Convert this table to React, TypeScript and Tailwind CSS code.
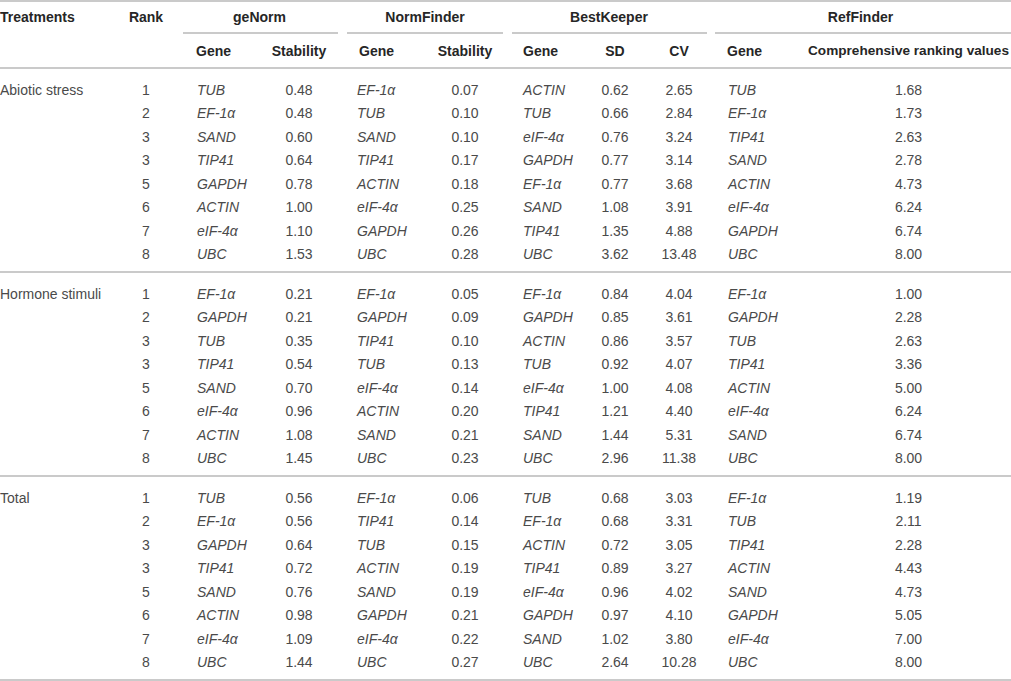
type Row = [string, string, string, string, string, string, string, string, string, string]

interface Group {
  name: string
  rows: Row[]
}

const groups: Group[] = [
  {
    name: 'Abiotic stress',
    rows: [
      ['1', 'TUB', '0.48', 'EF-1α', '0.07', 'ACTIN', '0.62', '2.65', 'TUB', '1.68'],
      ['2', 'EF-1α', '0.48', 'TUB', '0.10', 'TUB', '0.66', '2.84', 'EF-1α', '1.73'],
      ['3', 'SAND', '0.60', 'SAND', '0.10', 'eIF-4α', '0.76', '3.24', 'TIP41', '2.63'],
      ['3', 'TIP41', '0.64', 'TIP41', '0.17', 'GAPDH', '0.77', '3.14', 'SAND', '2.78'],
      ['5', 'GAPDH', '0.78', 'ACTIN', '0.18', 'EF-1α', '0.77', '3.68', 'ACTIN', '4.73'],
      ['6', 'ACTIN', '1.00', 'eIF-4α', '0.25', 'SAND', '1.08', '3.91', 'eIF-4α', '6.24'],
      ['7', 'eIF-4α', '1.10', 'GAPDH', '0.26', 'TIP41', '1.35', '4.88', 'GAPDH', '6.74'],
      ['8', 'UBC', '1.53', 'UBC', '0.28', 'UBC', '3.62', '13.48', 'UBC', '8.00'],
    ],
  },
  {
    name: 'Hormone stimuli',
    rows: [
      ['1', 'EF-1α', '0.21', 'EF-1α', '0.05', 'EF-1α', '0.84', '4.04', 'EF-1α', '1.00'],
      ['2', 'GAPDH', '0.21', 'GAPDH', '0.09', 'GAPDH', '0.85', '3.61', 'GAPDH', '2.28'],
      ['3', 'TUB', '0.35', 'TIP41', '0.10', 'ACTIN', '0.86', '3.57', 'TUB', '2.63'],
      ['3', 'TIP41', '0.54', 'TUB', '0.13', 'TUB', '0.92', '4.07', 'TIP41', '3.36'],
      ['5', 'SAND', '0.70', 'eIF-4α', '0.14', 'eIF-4α', '1.00', '4.08', 'ACTIN', '5.00'],
      ['6', 'eIF-4α', '0.96', 'ACTIN', '0.20', 'TIP41', '1.21', '4.40', 'eIF-4α', '6.24'],
      ['7', 'ACTIN', '1.08', 'SAND', '0.21', 'SAND', '1.44', '5.31', 'SAND', '6.74'],
      ['8', 'UBC', '1.45', 'UBC', '0.23', 'UBC', '2.96', '11.38', 'UBC', '8.00'],
    ],
  },
  {
    name: 'Total',
    rows: [
      ['1', 'TUB', '0.56', 'EF-1α', '0.06', 'TUB', '0.68', '3.03', 'EF-1α', '1.19'],
      ['2', 'EF-1α', '0.56', 'TIP41', '0.14', 'EF-1α', '0.68', '3.31', 'TUB', '2.11'],
      ['3', 'GAPDH', '0.64', 'TUB', '0.15', 'ACTIN', '0.72', '3.05', 'TIP41', '2.28'],
      ['3', 'TIP41', '0.72', 'ACTIN', '0.19', 'TIP41', '0.89', '3.27', 'ACTIN', '4.43'],
      ['5', 'SAND', '0.76', 'SAND', '0.19', 'eIF-4α', '0.96', '4.02', 'SAND', '4.73'],
      ['6', 'ACTIN', '0.98', 'GAPDH', '0.21', 'GAPDH', '0.97', '4.10', 'GAPDH', '5.05'],
      ['7', 'eIF-4α', '1.09', 'eIF-4α', '0.22', 'SAND', '1.02', '3.80', 'eIF-4α', '7.00'],
      ['8', 'UBC', '1.44', 'UBC', '0.27', 'UBC', '2.64', '10.28', 'UBC', '8.00'],
    ],
  },
]

const cols = 'grid grid-cols-[115px_62px_79px_86px_80px_86px_74px_66px_62px_96px_205px]'

function GroupHead({ title, span, line }: { title: string; span: string; line: string }) {
  return (
    <div className={`${span} flex flex-col`}>
      <div className="h-[30px] flex items-center justify-center">{title}</div>
      <div className={`h-[2px] bg-[#cacaca] ${line}`} />
    </div>
  )
}

export default function App() {
  return (
    <div
      className="w-[1011px] h-[681px] overflow-hidden bg-white text-[14px] leading-none text-[#4a4a4a]"
      style={{ fontFamily: '"Liberation Sans", Arial, sans-serif' }}
    >
      {/* ── HEADER ── */}
      <div className="border-t-2 border-b-2 border-[#cacaca] font-bold text-[#262626]">
        <div className={cols}>
          <div className="h-[30px] flex items-center">Treatments</div>
          <div className="h-[30px] flex items-center justify-center">Rank</div>
          <GroupHead title="geNorm" span="col-span-2" line="ml-[6px] mr-[4px]" />
          <GroupHead title="NormFinder" span="col-span-2" line="ml-[5px] mr-[5px]" />
          <GroupHead title="BestKeeper" span="col-span-3" line="ml-[4px] mr-[3px]" />
          <GroupHead title="RefFinder" span="col-span-2" line="ml-[5px]" />
        </div>
        <div className={`${cols} h-[33px] items-center`}>
          <div />
          <div />
          <div className="pl-[19px]">Gene</div>
          <div className="text-center">Stability</div>
          <div className="pl-[17px]">Gene</div>
          <div className="text-center">Stability</div>
          <div className="pl-[15px]">Gene</div>
          <div className="text-center">SD</div>
          <div className="text-center">CV</div>
          <div className="pl-[17px]">Gene</div>
          <div className="text-center whitespace-nowrap text-[13.6px]">Comprehensive ranking values</div>
        </div>
      </div>

      {/* ── BODY ── */}
      {groups.map((g) => (
        <div key={g.name} className="pt-[9px] pb-[5px] border-b-2 border-[#cacaca]">
          {g.rows.map((r, i) => (
            <div key={i} className={`${cols} h-[23.5px] items-center`}>
              <div className="whitespace-nowrap">{i === 0 ? g.name : ''}</div>
              <div className="text-center">{r[0]}</div>
              <div className="pl-[20px] italic">{r[1]}</div>
              <div className="text-center">{r[2]}</div>
              <div className="pl-[15px] italic">{r[3]}</div>
              <div className="text-center">{r[4]}</div>
              <div className="pl-[15px] italic">{r[5]}</div>
              <div className="text-center">{r[6]}</div>
              <div className="text-center">{r[7]}</div>
              <div className="pl-[18px] italic">{r[8]}</div>
              <div className="text-center">{r[9]}</div>
            </div>
          ))}
        </div>
      ))}
    </div>
  )
}
